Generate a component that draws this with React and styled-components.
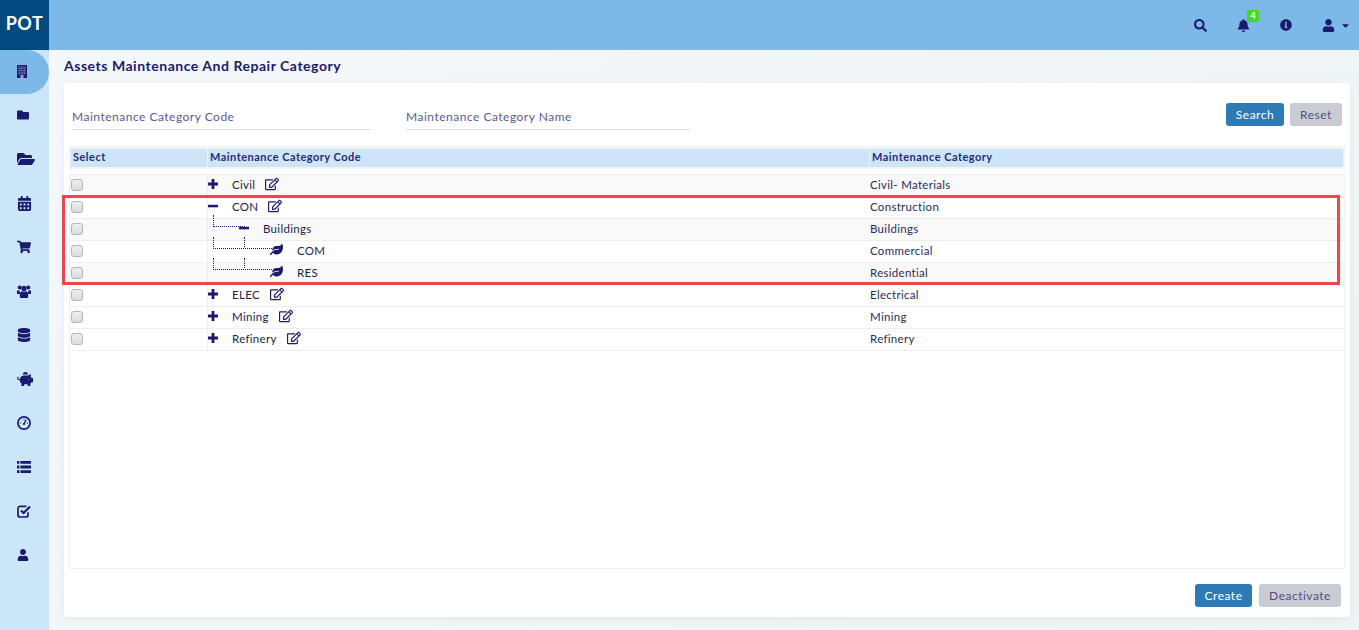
import React from "react";
import styled, { createGlobalStyle } from "styled-components";
import {
  FaFolder,
  FaFolderOpen,
  FaCalendarAlt,
  FaShoppingCart,
  FaDatabase,
  FaPiggyBank,
  FaUser,
  FaSearch,
  FaBell,
  FaInfoCircle,
  FaCaretDown,
  FaLeaf,
  FaRegEdit,
} from "react-icons/fa";

const NAVY = "#1a1a6e";

const GlobalStyle = createGlobalStyle`
  html, body {
    margin: 0;
    padding: 0;
    overflow: hidden;
  }
  body {
    font-family: Lato, "Liberation Sans", sans-serif;
    color: ${NAVY};
  }
`;

function BuildingIcon() {
  const windows = [];
  for (let y = 1.5; y < 9; y += 1.7) {
    for (let x = 1.5; x < 8; x += 1.9) {
      windows.push(<rect key={x + "-" + y} x={x} y={y} width="1.2" height="1" fill="#8fa6d6" />);
    }
  }
  return (
    <svg width="10" height="13" viewBox="0 0 10 13">
      <rect width="10" height="13" fill={NAVY} />
      {windows}
      <rect x="3.5" y="10" width="3" height="3" fill="#8fa6d6" />
    </svg>
  );
}

function UsersIcon() {
  return (
    <svg width="1em" height="1em" viewBox="0 0 14 14" fill={NAVY}>
      <circle cx="2.7" cy="3.6" r="2" />
      <circle cx="11.3" cy="3.6" r="2" />
      <circle cx="7" cy="4.4" r="2.6" />
      <path d="M0 6.6h2.6L3 10H0z" />
      <path d="M14 6.6h-2.6L11 10h3z" />
      <path d="M3.8 7.6h6.4l1 2.2V13a1 1 0 0 1-1 1H3.8a1 1 0 0 1-1-1V9.8z" />
    </svg>
  );
}

function GaugeIcon() {
  return (
    <svg width="1em" height="1em" viewBox="0 0 14 14" fill="none" stroke={NAVY}>
      <circle cx="7" cy="7" r="6.1" strokeWidth="1.7" />
      <path d="M7 8l2-4.2" strokeWidth="1.3" />
      <path d="M3 7h1.2M9.8 7H11M7 3v1" strokeWidth="1" />
      <circle cx="7" cy="8" r="1.1" fill={NAVY} stroke="none" />
    </svg>
  );
}

function CheckSquareIcon() {
  return (
    <svg width="1em" height="1em" viewBox="0 0 14 14" fill="none" stroke={NAVY}>
      <path d="M11 8.2V11a2 2 0 0 1-2 2H3a2 2 0 0 1-2-2V4.4a2 2 0 0 1 2-2h6.4" strokeWidth="1.7" />
      <path d="M4 6.4l2.6 2.6L13 2.6" strokeWidth="2.1" />
    </svg>
  );
}

function ListIcon() {
  return (
    <svg width="1em" height="1em" viewBox="0 0 14 14" fill={NAVY}>
      <path d="M0 1h2.4v2.8H0zM3.4 1H14v2.8H3.4zM0 5.6h2.4v2.8H0zM3.4 5.6H14v2.8H3.4zM0 10.2h2.4V13H0zM3.4 10.2H14V13H3.4z" />
    </svg>
  );
}

function PlusIcon() {
  return (
    <svg width="10" height="10" viewBox="0 0 10 10" fill={NAVY}>
      <path d="M3.6 0h2.8v3.6H10v2.8H6.4V10H3.6V6.4H0V3.6h3.6z" />
    </svg>
  );
}

function MinusIcon() {
  return (
    <svg width="10" height="10" viewBox="0 0 10 10" fill={NAVY}>
      <rect y="3.8" width="10" height="2.5" />
    </svg>
  );
}

const sideItems = [
  { Icon: BuildingIcon, size: 13 },
  { Icon: FaFolder, size: 12 },
  { Icon: FaFolderOpen, size: 18 },
  { Icon: FaCalendarAlt, size: 15 },
  { Icon: FaShoppingCart, size: 14 },
  { Icon: UsersIcon, size: 14 },
  { Icon: FaDatabase, size: 14 },
  { Icon: FaPiggyBank, size: 16 },
  { Icon: GaugeIcon, size: 14 },
  { Icon: ListIcon, size: 14 },
  { Icon: CheckSquareIcon, size: 14 },
  { Icon: FaUser, size: 12 },
];

const rows = [
  { code: "Civil", name: "Civil- Materials", kind: "plus", shade: true },
  { code: "CON", name: "Construction", kind: "minus" },
  { code: "Buildings", name: "Buildings", kind: "branch", shade: true },
  { code: "COM", name: "Commercial", kind: "leaf" },
  { code: "RES", name: "Residential", kind: "leaf", shade: true },
  { code: "ELEC", name: "Electrical", kind: "plus" },
  { code: "Mining", name: "Mining", kind: "plus" },
  { code: "Refinery", name: "Refinery", kind: "plus" },
];

function TreeIcon({ kind }) {
  if (kind === "plus") return <PlusIcon />;
  if (kind === "minus" || kind === "branch") return <MinusIcon />;
  return <FaLeaf />;
}

function App() {
  return (
    <>
      <GlobalStyle />
      <Page>
        <TopBar>
          <Logo>POT</Logo>
          <TopIcons>
            <TopIcon $size={13}>
              <FaSearch />
            </TopIcon>
            <TopIcon $size={13}>
              <FaBell />
              <Badge>4</Badge>
            </TopIcon>
            <TopIcon $size={12}>
              <FaInfoCircle />
            </TopIcon>
            <UserIcon $size={13}>
              <FaUser />
              <FaCaretDown />
            </UserIcon>
          </TopIcons>
        </TopBar>
        <Body>
          <Sidebar>
            {sideItems.map(({ Icon, size }, i) => (
              <SideItem key={i} $active={i === 0} $size={size}>
                <Icon />
              </SideItem>
            ))}
          </Sidebar>
          <Main>
            <Title>Assets Maintenance And Repair Category</Title>
            <Card>
              <FilterBar>
                <Field $width={299} $pad={1}>Maintenance Category Code</Field>
                <Field $width={284} $pad={0}>Maintenance Category Name</Field>
                <FilterButtons>
                  <Button $primary $width={58}>Search</Button>
                  <Button $width={52}>Reset</Button>
                </FilterButtons>
              </FilterBar>
              <Table>
                <HeadRow>
                  <HeadCell>Select</HeadCell>
                  <HeadCell>Maintenance Category Code</HeadCell>
                  <HeadCell>Maintenance Category</HeadCell>
                </HeadRow>
                <TableBody>
                  {rows.map((row) => (
                    <Row key={row.code} $shade={row.shade}>
                      <CheckCell>
                        <Check />
                      </CheckCell>
                      <CodeCell>
                        <TreeBtn $kind={row.kind}>
                          <TreeIcon kind={row.kind} />
                        </TreeBtn>
                        <CodeText $kind={row.kind}>{row.code}</CodeText>
                        {(row.kind === "plus" || row.kind === "minus") && (
                          <EditBtn>
                            <FaRegEdit />
                          </EditBtn>
                        )}
                      </CodeCell>
                      <NameCell>{row.name}</NameCell>
                    </Row>
                  ))}
                  <Connector $left={143} $top={40} $w={31} $h={11} />
                  <Connector $left={143} $top={62} $w={58} $h={11} />
                  <Connector $left={143} $top={83} $w={58} $h={11} />
                  <Connector $left={174} $top={62} $w={0} $h={10} $noBottom />
                  <Connector $left={174} $top={83} $w={0} $h={10} $noBottom />
                  <Highlight />
                </TableBody>
              </Table>
              <Footer>
                <Button $primary $width={57}>Create</Button>
                <Button $width={82}>Deactivate</Button>
              </Footer>
            </Card>
          </Main>
        </Body>
      </Page>
    </>
  );
}

export default App;

const Page = styled.div`
  width: 1359px;
  height: 630px;
  display: flex;
  flex-direction: column;
  overflow: hidden;
`;

const TopBar = styled.header`
  height: 50px;
  flex: none;
  display: flex;
  align-items: center;
  justify-content: space-between;
  background: #7cb8e8;
`;

const Logo = styled.div`
  width: 49px;
  height: 50px;
  background: #004a80;
  color: #fff;
  font-size: 18px;
  font-weight: 700;
  line-height: 47px;
  letter-spacing: 0.5px;
  text-align: center;
`;

const TopIcons = styled.div`
  display: flex;
  align-items: center;
  gap: 30px;
  padding-right: 8px;
`;

const TopIcon = styled.span`
  position: relative;
  display: flex;
  font-size: ${(p) => p.$size}px;
  color: ${NAVY};
`;

const UserIcon = styled(TopIcon)`
  gap: 5px;
  align-items: center;
  svg:last-child {
    font-size: 11px;
  }
`;

const Badge = styled.span`
  position: absolute;
  top: -9px;
  left: 10px;
  width: 12px;
  height: 12px;
  border-radius: 2px;
  background: #3ddc1c;
  color: #fff;
  font-size: 9px;
  font-weight: 700;
  line-height: 12px;
  text-align: center;
`;

const Body = styled.div`
  flex: 1;
  display: flex;
  min-height: 0;
`;

const Sidebar = styled.nav`
  width: 49px;
  flex: none;
  background: #cbe5f9;
`;

const SideItem = styled.div`
  height: 44px;
  display: flex;
  align-items: center;
  padding: 0 0 2px 17px;
  box-sizing: border-box;
  font-size: ${(p) => p.$size}px;
  color: ${NAVY};
  background: ${(p) => (p.$active ? "#7cb8e8" : "transparent")};
  border-radius: ${(p) => (p.$active ? "0 22px 22px 0" : "0")};
`;

const Main = styled.main`
  flex: 1;
  min-width: 0;
  padding: 0 9px 13px 15px;
  display: flex;
  flex-direction: column;
  background: linear-gradient(135deg, #f4f8fb, #eef3f6);
`;

const Title = styled.h1`
  margin: 0;
  height: 33px;
  flex: none;
  font-size: 14px;
  font-weight: 700;
  line-height: 32px;
  letter-spacing: 0.53px;
  color: ${NAVY};
`;

const Card = styled.section`
  flex: 1;
  display: flex;
  flex-direction: column;
  background: #fff;
  border-radius: 4px;
  padding: 0 5px;
  box-shadow: 0 2px 8px rgba(60, 90, 120, 0.08);
`;

const FilterBar = styled.div`
  height: 63px;
  flex: none;
  display: flex;
  gap: 35px;
  align-items: flex-start;
  padding: 0 3px 0 2px;
`;

const Field = styled.div`
  width: ${(p) => p.$width}px;
  margin-top: 25px;
  height: 21px;
  border-bottom: 1px solid #ddd;
  font-size: 12px;
  line-height: 18px;
  letter-spacing: 0.5px;
  padding-left: ${(p) => p.$pad}px;
  color: #5a5a96;
`;

const FilterButtons = styled.div`
  margin-left: auto;
  margin-top: 20px;
  display: flex;
  gap: 6px;
`;

const Button = styled.button`
  width: ${(p) => p.$width}px;
  height: 23px;
  padding: 0;
  border: 0;
  border-radius: 3px;
  font-family: inherit;
  font-size: 12px;
  letter-spacing: 0.5px;
  background: ${(p) => (p.$primary ? "#2e7ab6" : "#c9ccd3")};
  color: ${(p) => (p.$primary ? "#fff" : "#4f4f85")};
`;

const Table = styled.div`
  flex: 1;
  display: flex;
  flex-direction: column;
  min-height: 0;
`;

const HeadRow = styled.div`
  display: grid;
  grid-template-columns: 136px 661px 1fr;
  gap: 1px;
  height: 18px;
  padding: 3px 2px 2px;
  background: #f3f3f3;
  flex: none;
`;

const HeadCell = styled.div`
  background: #cce5f9;
  font-size: 11px;
  font-weight: 700;
  line-height: 16px;
  letter-spacing: 0.48px;
  padding-left: 2px;
  color: #2a2a78;
`;

const TableBody = styled.div`
  position: relative;
  height: 395px;
  flex: none;
  margin-top: 5px;
  border: 1px solid #eee;
  box-sizing: border-box;
`;

const Row = styled.div`
  display: grid;
  grid-template-columns: 138px 662px 1fr;
  height: 22px;
  box-sizing: border-box;
  border-bottom: 1px solid #eee;
  background: ${(p) => (p.$shade ? "#f9f9f9" : "#fff")};
`;

const CheckCell = styled.div`
  display: flex;
  align-items: center;
  padding: 0 0 2px 1px;
  border-right: 1px solid #eee;
`;

const Check = styled.span`
  width: 10px;
  height: 10px;
  border: 1px solid #b4b4b4;
  border-radius: 3px;
  background: linear-gradient(#eeeeee, #dcdcdc);
`;

const CodeCell = styled.div`
  display: flex;
  align-items: center;
  padding-bottom: 2px;
  font-size: 11.5px;
  letter-spacing: 0.3px;
`;

const treeOffset = { branch: "31px", leaf: "62px" };

const TreeBtn = styled.span`
  display: flex;
  flex: none;
  width: ${(p) => (p.$kind === "leaf" ? "13px" : "11px")};
  font-size: 13px;
  color: ${NAVY};
  margin: 0 0 2px ${(p) => treeOffset[p.$kind] || "0"};
`;

const CodeText = styled.span`
  margin-left: ${(p) => (p.$kind === "leaf" ? "14px" : "13px")};
  color: #1c1c4c;
`;

const EditBtn = styled.span`
  display: flex;
  margin: -2px 0 0 10px;
  font-size: 14px;
  color: ${NAVY};
`;

const NameCell = styled.div`
  font-size: 11.5px;
  letter-spacing: 0.3px;
  line-height: 19px;
  color: #2a2a5c;
`;

const Connector = styled.span`
  position: absolute;
  left: ${(p) => p.$left}px;
  top: ${(p) => p.$top}px;
  width: ${(p) => p.$w}px;
  height: ${(p) => p.$h}px;
  border-left: 1px dotted ${NAVY};
  border-bottom: ${(p) => (p.$noBottom ? "0" : `1px dotted ${NAVY}`)};
`;

const Highlight = styled.div`
  position: absolute;
  left: -8px;
  top: 20px;
  width: 1278px;
  height: 90px;
  box-sizing: border-box;
  border: 3px solid #f4434a;
  pointer-events: none;
`;

const Footer = styled.div`
  height: 48px;
  flex: none;
  display: flex;
  justify-content: flex-end;
  align-items: center;
  gap: 7px;
  padding: 5px 4px 0 0;
  box-sizing: border-box;
`;
